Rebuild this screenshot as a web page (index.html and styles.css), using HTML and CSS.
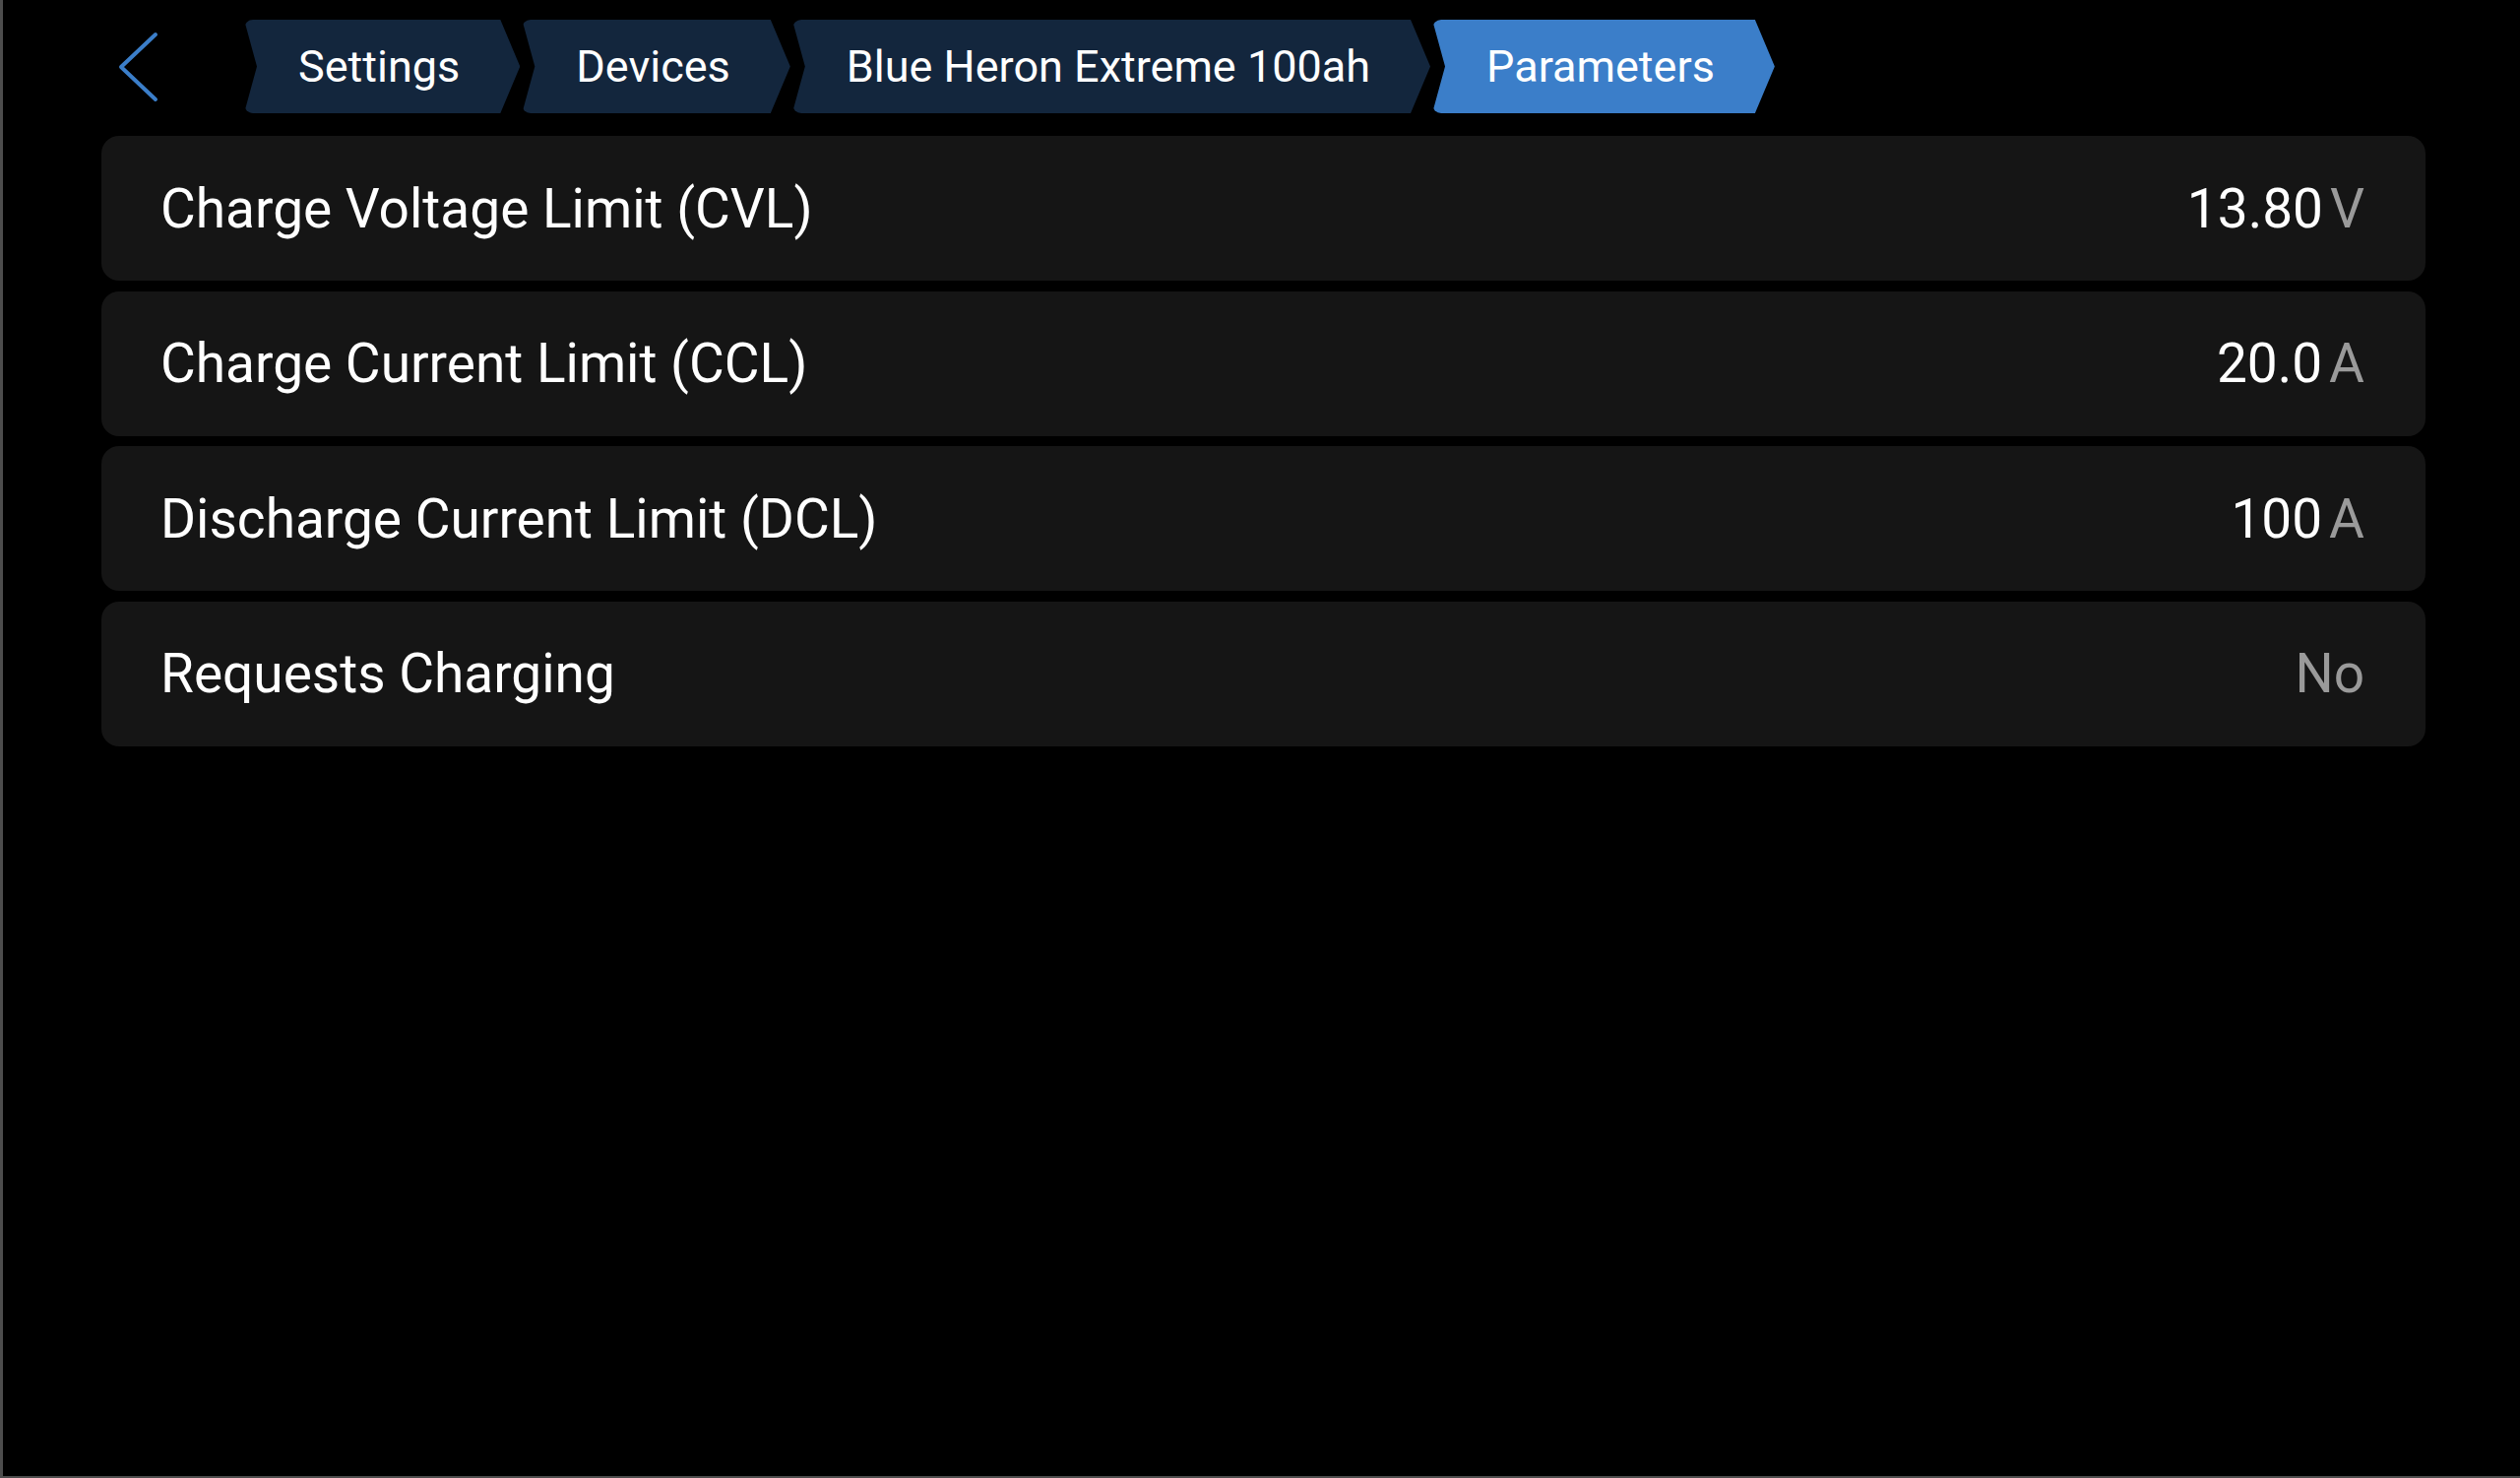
FILE: index.html
```html
<!DOCTYPE html>
<html lang="en">
<head>
  <meta charset="UTF-8">
  <meta name="viewport" content="width=device-width, initial-scale=1.0">
  <title>Parameters</title>
  <link rel="stylesheet" href="styles.css">
</head>
<body>
  <header class="top-bar">
      <button class="back-btn" aria-label="Back">
          <svg width="46" height="72" viewBox="0 0 46 72">
              <path d="M40 3 L5 36 L40 69" fill="none" stroke="#3b7ec9" stroke-width="4" stroke-linecap="round" stroke-linejoin="round"/>
          </svg>
      </button>
      <nav class="crumbs">
          <a class="crumb" href="#">Settings</a>
          <a class="crumb" href="#">Devices</a>
          <a class="crumb" href="#">Blue Heron Extreme 100ah</a>
          <a class="crumb active" href="#">Parameters</a>
      </nav>
  </header>

  <main class="list">
      <div class="row">
          <span class="label">Charge Voltage Limit (CVL)</span>
          <span class="value">13.80<span class="unit">V</span></span>
      </div>
      <div class="row">
          <span class="label">Charge Current Limit (CCL)</span>
          <span class="value">20.0<span class="unit">A</span></span>
      </div>
      <div class="row">
          <span class="label">Discharge Current Limit (DCL)</span>
          <span class="value">100<span class="unit">A</span></span>
      </div>
      <div class="row">
          <span class="label">Requests Charging</span>
          <span class="value muted">No</span>
      </div>
  </main>
</body>
</html>
```

FILE: styles.css
```css
html, body {
    height: 100%;
}
body {
    margin: 0;
    box-sizing: border-box;
    background: #000;
    color: #fff;
    font-family: Roboto, "Liberation Sans", sans-serif;
    border-left: 3px solid #4d4d4d;
    border-bottom: 2px solid #4d4d4d;
}
.top-bar {
    display: flex;
    align-items: center;
    height: 95px;
    padding: 20px 0 0 115px;
}
.back-btn {
    background: none;
    border: none;
    padding: 0;
    display: flex;
    cursor: pointer;
}
.crumbs {
    display: flex;
    margin-left: 84px;
    height: 95px;
}
.crumb {
    display: flex;
    align-items: center;
    height: 100%;
    padding: 0 61px 0 55px;
    margin-right: 2px;
    background: #13263d;
    color: #fff;
    font-size: 45px;
    text-decoration: none;
    border-radius: 9px;
    clip-path: polygon(0 0, calc(100% - 20px) 0, 100% 50%, calc(100% - 20px) 100%, 0 100%, 13px 50%);
}
.crumb.active {
    background: #3b7ec9;
}
.list {
    display: flex;
    flex-direction: column;
    gap: 10.5px;
    margin: 23px 96px 0 100px;
}
.row {
    display: flex;
    align-items: center;
    justify-content: space-between;
    height: 147px;
    padding: 0 62px 0 60px;
    background: #151515;
    border-radius: 18px;
    font-size: 55px;
}
.value {
    color: #fff;
}
.unit {
    color: #9a9a9a;
    margin-left: 7px;
}
.value.muted {
    color: #9a9a9a;
}
```
